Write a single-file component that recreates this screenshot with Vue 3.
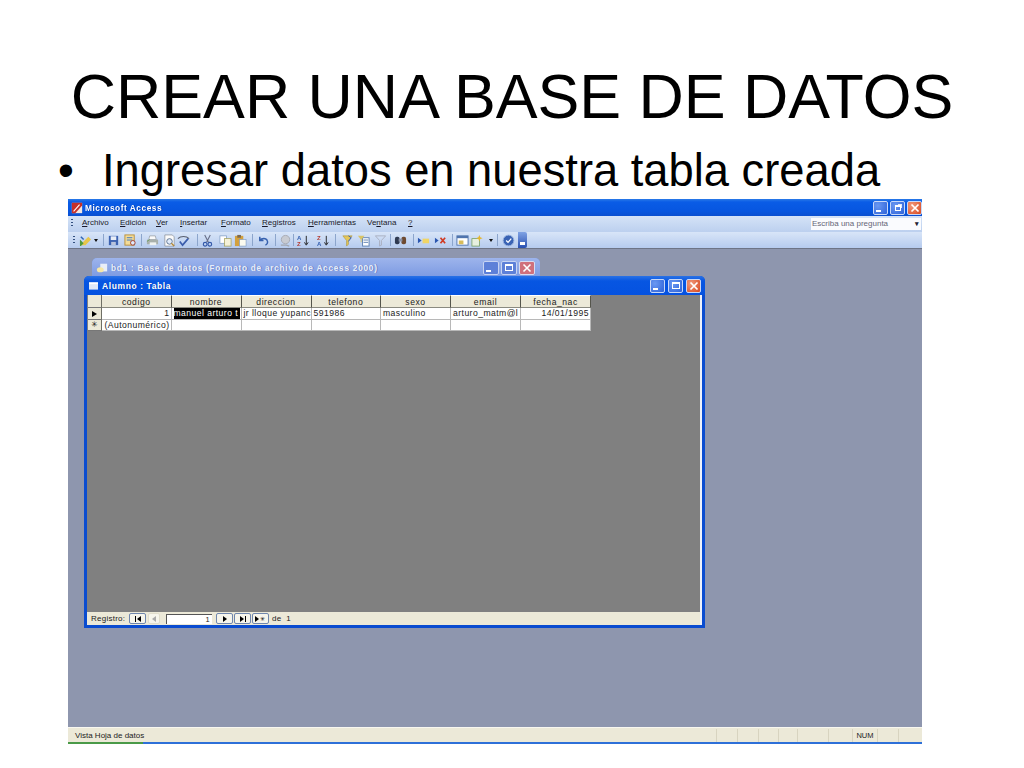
<script setup>
const menus = [
  { pre: '', key: 'A', post: 'rchivo', w: 38 },
  { pre: '', key: 'E', post: 'dición', w: 36 },
  { pre: '', key: 'V', post: 'er', w: 24 },
  { pre: '', key: 'I', post: 'nsertar', w: 41 },
  { pre: '', key: 'F', post: 'ormato', w: 41 },
  { pre: '', key: 'R', post: 'egistros', w: 46 },
  { pre: '', key: 'H', post: 'erramientas', w: 59 },
  { pre: 'Ve', key: 'n', post: 'tana', w: 41 },
  { pre: '', key: '?', post: '', w: 10 }
]
const tools = [
  ['view', 78], ['arrow', 92], ['sep', 103], ['save', 106], ['dbsearch', 123], ['sep', 141], ['print', 145], ['preview', 162], ['spell', 176],
  ['sep', 197], ['cut', 200], ['copy', 218], ['paste', 233], ['sep', 252], ['undo', 256], ['sep', 275], ['hyper', 278], ['sep', 293], ['sortup', 296], ['sortdown', 316], ['sep', 335],
  ['filtersel', 340], ['filterform', 356], ['filter', 373], ['sep', 390], ['find', 393], ['sep', 413], ['newrec', 416], ['delrec', 433], ['sep', 452], ['dbwin', 455], ['newobj', 470], ['arrow', 487], ['sep', 497], ['help', 501], ['end', 518]
]
const toolCells = tools.map((t, i) => ({ type: t[0], width: (i + 1 < tools.length ? tools[i + 1][1] : t[1] + 9) - t[1] }))
const columns = [
  { name: 'codigo', w: 69.5 }, { name: 'nombre', w: 70 }, { name: 'direccion', w: 70 }, { name: 'telefono', w: 69.5 },
  { name: 'sexo', w: 70 }, { name: 'email', w: 70 }, { name: 'fecha_nac', w: 70 }
]
const record = ['1', 'manuel arturo t', 'jr lloque yupanc', '591986', 'masculino', 'arturo_matm@l', '14/01/1995']
const newRecord = ['(Autonumérico)', '', '', '', '', '', '']
const statusCells = [21, 21, 20, 19, 31, 24, 25, 21, 24]
</script>

<template>
  <div class="slide">
    <h1 class="title">CREAR UNA BASE DE DATOS</h1>
    <div class="bullet"><span class="dot">•</span><span>Ingresar datos en nuestra tabla creada</span></div>

    <div class="app">
      <div class="titlebar main">
        <svg class="appicon" viewBox="0 0 14 14"><rect x="1" y="1" width="12" height="12" fill="#f4e6e0"/><path d="M1 1h12v3L5 13H1z" fill="#c4302a"/><path d="M3 11 10 3" stroke="#fff" stroke-width="1.2"/></svg>
        <span class="tt">Microsoft Access</span>
        <div class="btns">
          <span class="wb blue"><i class="min"></i></span>
          <span class="wb blue"><i class="rest"></i></span>
          <span class="wb red"><svg viewBox="0 0 10 10"><path d="M1.5 1.5l7 7M8.5 1.5l-7 7" stroke="#fff" stroke-width="1.7"/></svg></span>
        </div>
      </div>

      <div class="menubar">
        <span class="grip"></span>
        <span v-for="m in menus" :key="m.post + m.key" class="menu" :style="{ width: m.w + 'px' }">{{ m.pre }}<u>{{ m.key }}</u>{{ m.post }}</span>
        <div class="ask"><span>Escriba una pregunta</span><b>▾</b></div>
      </div>

      <div class="toolbar">
        <span class="grip tg"></span>
        <span v-for="(t, i) in toolCells" :key="i" class="cell" :style="{ width: t.width + 'px' }">
          <span v-if="t.type === 'sep'" class="sep"></span>
          <span v-else-if="t.type === 'arrow'" class="arr"></span>
          <span v-else-if="t.type === 'end'" class="endchev"><i></i></span>
          <svg v-else class="ti" viewBox="0 0 14 14">
            <template v-if="t.type === 'view'"><path d="M1 12 10 3l3 3-6 6z" fill="#e7c64c"/><path d="M1 6l4 4-3 3H1z" fill="#4f9a3f"/><path d="M2 3l3 3" stroke="#3167b5" stroke-width="1.6"/></template>
            <template v-else-if="t.type === 'save'"><rect x="2" y="2" width="10" height="10" fill="#3c62b0"/><rect x="4" y="2.500" width="6" height="4" fill="#e8edf6"/><rect x="4.500" y="8.500" width="5" height="3.500" fill="#b9c4dc"/></template>
            <template v-else-if="t.type === 'dbsearch'"><rect x="1" y="1" width="10" height="11" fill="#f3dc9a" stroke="#b88e3a"/><path d="M3 4h6M3 6.500h6" stroke="#3a76c0"/><circle cx="9.500" cy="9.500" r="2.500" fill="#dfeafa" stroke="#a03a30"/></template>
            <template v-else-if="t.type === 'print'"><path d="M4 2h6l1 4H3z" fill="#fafafa" stroke="#8a8f98" stroke-width=".7"/><path d="M1 6h12v5H1z" fill="#a8b0ab"/><path d="M4 9h7v3H4z" fill="#f0f3f0"/><path d="M1 8l3-2" stroke="#6a9a64"/></template>
            <template v-else-if="t.type === 'preview'"><path d="M2 1h8l2 2v10H2z" fill="#fbfbfb" stroke="#8a8f98" stroke-width=".8"/><circle cx="7" cy="8" r="3" fill="#dfeafa" stroke="#5a7090"/><path d="M9 10l3 3" stroke="#b48a3a" stroke-width="1.500"/></template>
            <template v-else-if="t.type === 'spell'"><path d="M1 5c3-3 9-3 12 0" stroke="#5a6070" fill="none" stroke-width="1.200"/><path d="M3 8l3 4 6-7" stroke="#3b5dac" fill="none" stroke-width="1.800"/></template>
            <template v-else-if="t.type === 'cut'"><path d="M4 1l4 8M10 1L6 9" stroke="#69708a" stroke-width="1.200"/><circle cx="4.500" cy="11" r="2" fill="none" stroke="#3257a8" stroke-width="1.200"/><circle cx="9.500" cy="11" r="2" fill="none" stroke="#3257a8" stroke-width="1.200"/></template>
            <template v-else-if="t.type === 'copy'"><rect x="1" y="2" width="7" height="8" fill="#fff" stroke="#7f9cc4" stroke-width=".8"/><rect x="6" y="5" width="7" height="8" fill="#f4f1d8" stroke="#a4a05a" stroke-width=".8"/></template>
            <template v-else-if="t.type === 'paste'"><rect x="1" y="2" width="9" height="11" fill="#d3a13e"/><rect x="3.500" y="1" width="4" height="3" fill="#7c6a50"/><rect x="6" y="6" width="7" height="7" fill="#fbfbf0" stroke="#7f9cc4" stroke-width=".7"/></template>
            <template v-else-if="t.type === 'undo'"><path d="M3 3v4h4M3 7c2-3 7-3 8 0 1 2 0 4-2 5" stroke="#3761ae" fill="none" stroke-width="1.600"/></template>
            <template v-else-if="t.type === 'hyper'"><circle cx="7" cy="6" r="4.500" fill="#c8cbd2" stroke="#a6aab3"/><path d="M2 12h6l3 1" stroke="#a2a6ae" stroke-width="1.500" fill="none"/></template>
            <template v-else-if="t.type === 'sortup'"><text x="0" y="6" class="s">A</text><text x="0" y="13" class="s z">Z</text><path d="M10 2v9M8 9l2 3 2-3" stroke="#222" fill="none"/></template>
            <template v-else-if="t.type === 'sortdown'"><text x="0" y="6" class="s z">Z</text><text x="0" y="13" class="s">A</text><path d="M10 2v9M8 9l2 3 2-3" stroke="#222" fill="none"/></template>
            <template v-else-if="t.type === 'filtersel'"><path d="M2 2h10L8 7v4l-2 2V7z" fill="#e5c75a" stroke="#a89036" stroke-width=".6"/><path d="M8 2l3 2-3 4" stroke="#3a5ea8" fill="none"/></template>
            <template v-else-if="t.type === 'filterform'"><rect x="6" y="4" width="7" height="9" fill="#fff" stroke="#5d7fb0"/><path d="M7 6.500h5M7 9h5" stroke="#5d7fb0"/><path d="M1 2h7L5 6v3L4 9V6z" fill="#d8c467"/></template>
            <template v-else-if="t.type === 'filter'"><path d="M1.500 2h11L8 7v5l-2 1V7z" fill="none" stroke="#a9afc0"/></template>
            <template v-else-if="t.type === 'find'"><rect x="1" y="3" width="5" height="8" rx="2" fill="#2f3a52"/><rect x="8" y="3" width="5" height="8" rx="2" fill="#6e4a30"/><rect x="5" y="5" width="4" height="3" fill="#8a93a8"/></template>
            <template v-else-if="t.type === 'newrec'"><path d="M1 4l4 3-4 3z" fill="#2a56b0"/><rect x="6" y="5" width="7" height="5" fill="#f0d565"/></template>
            <template v-else-if="t.type === 'delrec'"><path d="M1 4l4 3-4 3z" fill="#2a56b0"/><path d="M7 4l5 6M12 4l-5 6" stroke="#d13a22" stroke-width="1.800"/></template>
            <template v-else-if="t.type === 'dbwin'"><rect x="1" y="2" width="12" height="10" fill="#fff" stroke="#4f74ae"/><rect x="1" y="2" width="12" height="2.500" fill="#4f74ae"/><rect x="3" y="7" width="5" height="4" fill="#d8bc5a"/></template>
            <template v-else-if="t.type === 'newobj'"><rect x="1" y="5" width="8" height="8" fill="#e7f0e0" stroke="#6f9a5a" stroke-width=".8"/><path d="M9 1l1 2.500 2.500 1L10 5.500 9 8 8 5.500 5.500 4.500 8 3.500z" fill="#e4b52d"/></template>
            <template v-else-if="t.type === 'help'"><circle cx="7" cy="7" r="5.800" fill="#3a63b4" stroke="#9cb4df"/><path d="M4.500 7l2 2 3.500-4" stroke="#fff" fill="none" stroke-width="1.400"/></template>
          </svg>
        </span>
      </div>

      <div class="desktop">
        <div class="dbwin">
          <div class="titlebar inactive">
            <svg class="dbicon" viewBox="0 0 14 14"><rect x="5" y="2" width="8" height="9" fill="#e8eef8"/><ellipse cx="5" cy="9" rx="4" ry="3" fill="#f6e7a6"/></svg>
            <span class="tt">bd1 : Base de datos (Formato de archivo de Access 2000)</span>
            <div class="btns">
              <span class="wb iblue"><i class="min"></i></span>
              <span class="wb iblue"><i class="max"></i></span>
              <span class="wb ired"><svg viewBox="0 0 10 10"><path d="M1.500 1.500l7 7M8.500 1.500l-7 7" stroke="#fff" stroke-width="1.600"/></svg></span>
            </div>
          </div>
        </div>

        <div class="tablewin">
          <div class="titlebar child">
            <svg class="tabicon" viewBox="0 0 10 8"><rect width="10" height="8" fill="#dfe8f8"/><rect width="10" height="2" fill="#fff"/></svg>
            <span class="tt">Alumno : Tabla</span>
            <div class="btns">
              <span class="wb blue"><i class="min"></i></span>
              <span class="wb blue"><i class="max"></i></span>
              <span class="wb red"><svg viewBox="0 0 10 10"><path d="M1.500 1.500l7 7M8.500 1.500l-7 7" stroke="#fff" stroke-width="1.700"/></svg></span>
            </div>
          </div>
          <div class="client">
            <div class="gridarea">
              <div class="dgrid">
                <div class="row hdr">
                  <span class="sel"></span>
                  <span v-for="c in columns" :key="c.name" class="hc" :style="{ width: c.w + 'px' }">{{ c.name }}</span>
                </div>
                <div class="row body">
                  <span class="sel"><i class="cur"></i></span>
                  <span v-for="(v, i) in record" :key="i" class="dc" :class="{ num: i === 0 || i === 6, black: i === 1 }" :style="{ width: columns[i].w + 'px' }"><em>{{ v }}</em></span>
                </div>
                <div class="row body last">
                  <span class="sel star">✳</span>
                  <span v-for="(v, i) in newRecord" :key="i" class="dc" :class="{ num: i === 0 }" :style="{ width: columns[i].w + 'px' }"><em>{{ v }}</em></span>
                </div>
              </div>
            </div>
            <div class="recnav">
              <span class="rl">Registro:</span>
              <span class="nb"><i class="bar"></i><i class="tl"></i></span>
              <span class="nb off"><i class="tl grey"></i></span>
              <span class="recinput">1</span>
              <span class="nb"><i class="tr"></i></span>
              <span class="nb"><i class="tr"></i><i class="bar"></i></span>
              <span class="nb"><i class="tr"></i><b>✳</b></span>
              <span class="of">de&nbsp; 1</span>
            </div>
          </div>
        </div>
      </div>

      <div class="statusbar">
        <span class="stext">Vista Hoja de datos</span>
        <span v-for="(w, i) in statusCells" :key="i" class="scell" :style="{ width: w + 'px' }">{{ i === 6 ? 'NUM' : '' }}</span>
      </div>
      <div class="taskline"><span></span></div>
    </div>
  </div>
</template>

<style>
html, body { margin: 0; background: #fff; }
</style>

<style scoped>
.slide { width: 1024px; height: 768px; background: #fff; overflow: hidden; font-family: "Liberation Sans", Arial, sans-serif; color: #000; }
.title { margin: 0; padding-top: 60px; height: 72px; line-height: 72px; font-size: 62.700px; font-weight: 400; text-align: center; white-space: nowrap; }
.bullet { display: flex; box-sizing: border-box; height: 67px; padding: 9px 0 0 58px; font-size: 45.300px; line-height: 60px; white-space: nowrap; }
.dot { width: 44px; }
.app { margin-left: 68px; width: 854px; height: 545px; display: flex; flex-direction: column; font-family: "Liberation Sans", Arial, sans-serif; filter: blur(.3px); }
.titlebar { display: flex; align-items: center; color: #fff; font-weight: 700; }
.main { height: 17px; flex: none; background: linear-gradient(#2a7ae8 0, #0a5ce6 3px, #0756e0 12px, #0a4fd0 100%); padding: 0 0 0 3px; font-size: 8.300px; letter-spacing: .55px; }
.appicon { width: 12px; height: 12px; margin-right: 2px; }
.tt { white-space: nowrap; text-shadow: 1px 0 0 rgba(0,0,60,.25); }
.btns { margin-left: auto; display: flex; gap: 2px; }
.wb { width: 15px; height: 14px; border-radius: 2px; border: 1px solid #c8d8f8; box-sizing: border-box; position: relative; display: flex; align-items: center; justify-content: center; }
.blue { background: radial-gradient(circle at 30% 30%, #6a98f2, #2d62d8); }
.red { background: radial-gradient(circle at 30% 30%, #f09a7c, #d8481f); }
.iblue { background: #5d80d8; border-color: #c8d4f2; }
.ired { background: #d0707c; border-color: #d8dcf0; }
.wb svg { width: 10px; height: 10px; }
.min { position: absolute; left: 2px; bottom: 2px; width: 5px; height: 2px; background: #fff; }
.max { width: 8px; height: 7px; border: 1px solid #fff; border-top-width: 2px; box-sizing: border-box; }
.rest { width: 6px; height: 6px; border: 1px solid #fff; border-top-width: 2px; box-sizing: border-box; box-shadow: 2px -2px 0 -1px #dfe8ff; }
.menubar { height: 16px; flex: none; display: flex; align-items: center; background: linear-gradient(#d5e3f7, #bcd0ef); font-size: 8px; line-height: 14px; color: #1a1a2a; padding: 0 0 2px 3px; box-sizing: border-box; position: relative; }
.menubar .grip { margin-right: 9px; }
.grip { width: 2px; height: 9px; background-image: linear-gradient(#33507f 50%, transparent 50%); background-size: 2px 3px; flex: none; }
.menu { white-space: nowrap; flex: none; }
.ask { position: absolute; left: 743px; top: 2px; width: 110px; height: 12px; background: #fafbfe; display: flex; align-items: center; justify-content: space-between; font-size: 8px; color: #667; padding: 0 2px 0 1px; box-sizing: border-box; }
.ask b { font-size: 7px; color: #223; }
.toolbar { height: 16px; flex: none; display: flex; align-items: center; background: linear-gradient(#d8e5f8, #b6cbee); padding-left: 5px; box-sizing: border-box; }
.tg { margin-right: 3px; }
.cell { height: 16px; display: flex; align-items: center; justify-content: flex-start; flex: none; }
.ti { width: 13px; height: 13px; flex: none; margin-left: 1px; }
.sep { width: 1px; height: 12px; background: #8ca5cc; }
.arr { width: 0; height: 0; border: 2.500px solid transparent; border-top: 3px solid #111; border-bottom: 0; margin-left: 2px; }
.endchev { width: 9px; height: 16px; background: linear-gradient(#7fa2e4, #2a50b0); border-radius: 0 2px 2px 0; position: relative; }
.endchev i { position: absolute; left: 2px; bottom: 3px; width: 5px; height: 3px; background: #fff; }
.s { font: 700 6.500px "Liberation Sans", sans-serif; fill: #3560b0; }
.s.z { fill: #b43a30; }
.desktop { flex: 1; position: relative; background: #8e96ae; border-top: 1px solid #6e7486; box-sizing: border-box; }
.dbwin { position: absolute; left: 24px; top: 9px; width: 448px; height: 40px; background: #6f92de; border-radius: 5px 5px 0 0; }
.inactive { height: 19px; background: linear-gradient(#9db4ec, #7c9ae2); padding: 0 5px 0 4px; font-size: 8.300px; color: #e6edfb; letter-spacing: .72px; border-radius: 5px 5px 0 0; }
.inactive .wb { width: 16px; }
.dbicon { width: 12px; height: 12px; margin-right: 3px; }
.tablewin { position: absolute; left: 16px; top: 27px; width: 621px; height: 352px; background: #0a4cd0; border-radius: 5px 5px 0 0; display: flex; flex-direction: column; padding: 0 3px 3px; box-sizing: border-box; }
.child { height: 19px; flex: none; background: linear-gradient(#2a72e6, #0756e2 5px, #0552e0); margin: 0 -3px; padding: 0 4px 0 5px; font-size: 8.500px; letter-spacing: .6px; border-radius: 5px 5px 0 0; }
.child .btns { gap: 3px; }
.tabicon { width: 9px; height: 8px; margin-right: 4px; }
.client { flex: 1; display: flex; flex-direction: column; min-height: 0; border-right: 2px solid #eef2fb; }
.gridarea { flex: 1; background: #808080; padding-left: 1px; min-height: 0; }
.dgrid { width: 503px; background: #fff; font-size: 8.600px; color: #222; }
.row { display: flex; height: 12px; }
.row.hdr { height: 13px; background: #ece9d8; }
.sel { width: 14px; flex: none; box-sizing: border-box; background: #ece9d8; border-right: 1px solid #6f6f66; border-bottom: 1px solid #777; display: flex; align-items: center; justify-content: center; position: relative; }
.star { font-size: 8px; line-height: 1; color: #111; }
.cur { width: 0; height: 0; border: 3.500px solid transparent; border-left: 5px solid #000; border-right: 0; }
.hc { box-sizing: border-box; flex: none; text-align: center; line-height: 12px; border-right: 1px solid #55554c; border-bottom: 1px solid #8a8a80; border-top: 1px solid #fff; letter-spacing: .55px; }
.dc { box-sizing: border-box; flex: none; overflow: hidden; white-space: nowrap; line-height: 11px; padding: 0 1px 0 2px; border-right: 1px solid #b8b8b8; border-bottom: 1px solid #b8b8b8; letter-spacing: .45px; }
.dc em { font-style: normal; }
.num { text-align: right; }
.black em { background: #000; color: #fff; display: block; }
.row.last { height: 11px; }
.recnav { height: 13px; flex: none; background: #ece9d8; display: flex; align-items: center; font-size: 8px; color: #222; padding-left: 4px; letter-spacing: .25px; }
.rl { width: 38px; flex: none; }
.nb { width: 17px; height: 11px; box-sizing: border-box; border: 1px solid #6f86ad; border-radius: 2px; background: #f6f5ec; display: flex; align-items: center; justify-content: center; gap: 1px; margin-right: 1px; flex: none; }
.nb.off { width: 12px; border-color: #e0ddcc; margin-left: 1px; margin-right: 6px; }
.bar { width: 1px; height: 6px; background: #000; }
.tl { width: 0; height: 0; border: 3px solid transparent; border-right: 4px solid #000; border-left: 0; }
.tl.grey { border-right-color: #aaa; }
.tr { width: 0; height: 0; border: 3px solid transparent; border-left: 4px solid #000; border-right: 0; }
.nb b { font-size: 6px; line-height: 1; font-weight: 400; color: #000; }
.recinput { width: 46px; height: 10px; box-sizing: border-box; background: #fff; border-left: 1px solid #555; border-top: 1px solid #555; text-align: right; line-height: 10px; padding-right: 2px; margin-right: 4px; flex: none; font-size: 7.500px; }
.of { margin-left: 2px; }
.statusbar { height: 15px; margin-top: 0; flex: none; background: #ece9d8; display: flex; align-items: center; font-size: 8px; color: #222; border-top: 1px solid #f8f7f0; box-sizing: border-box; padding-left: 7px; }
.stext { width: 641px; flex: none; }
.scell { height: 13px; flex: none; box-sizing: border-box; border-left: 1px solid #d8d4c0; line-height: 13px; font-size: 7.500px; text-align: center; }
.taskline { height: 2px; flex: none; background: #2e70d8; }
.taskline span { display: block; width: 75px; height: 2px; background: #4a9a48; }
</style>
